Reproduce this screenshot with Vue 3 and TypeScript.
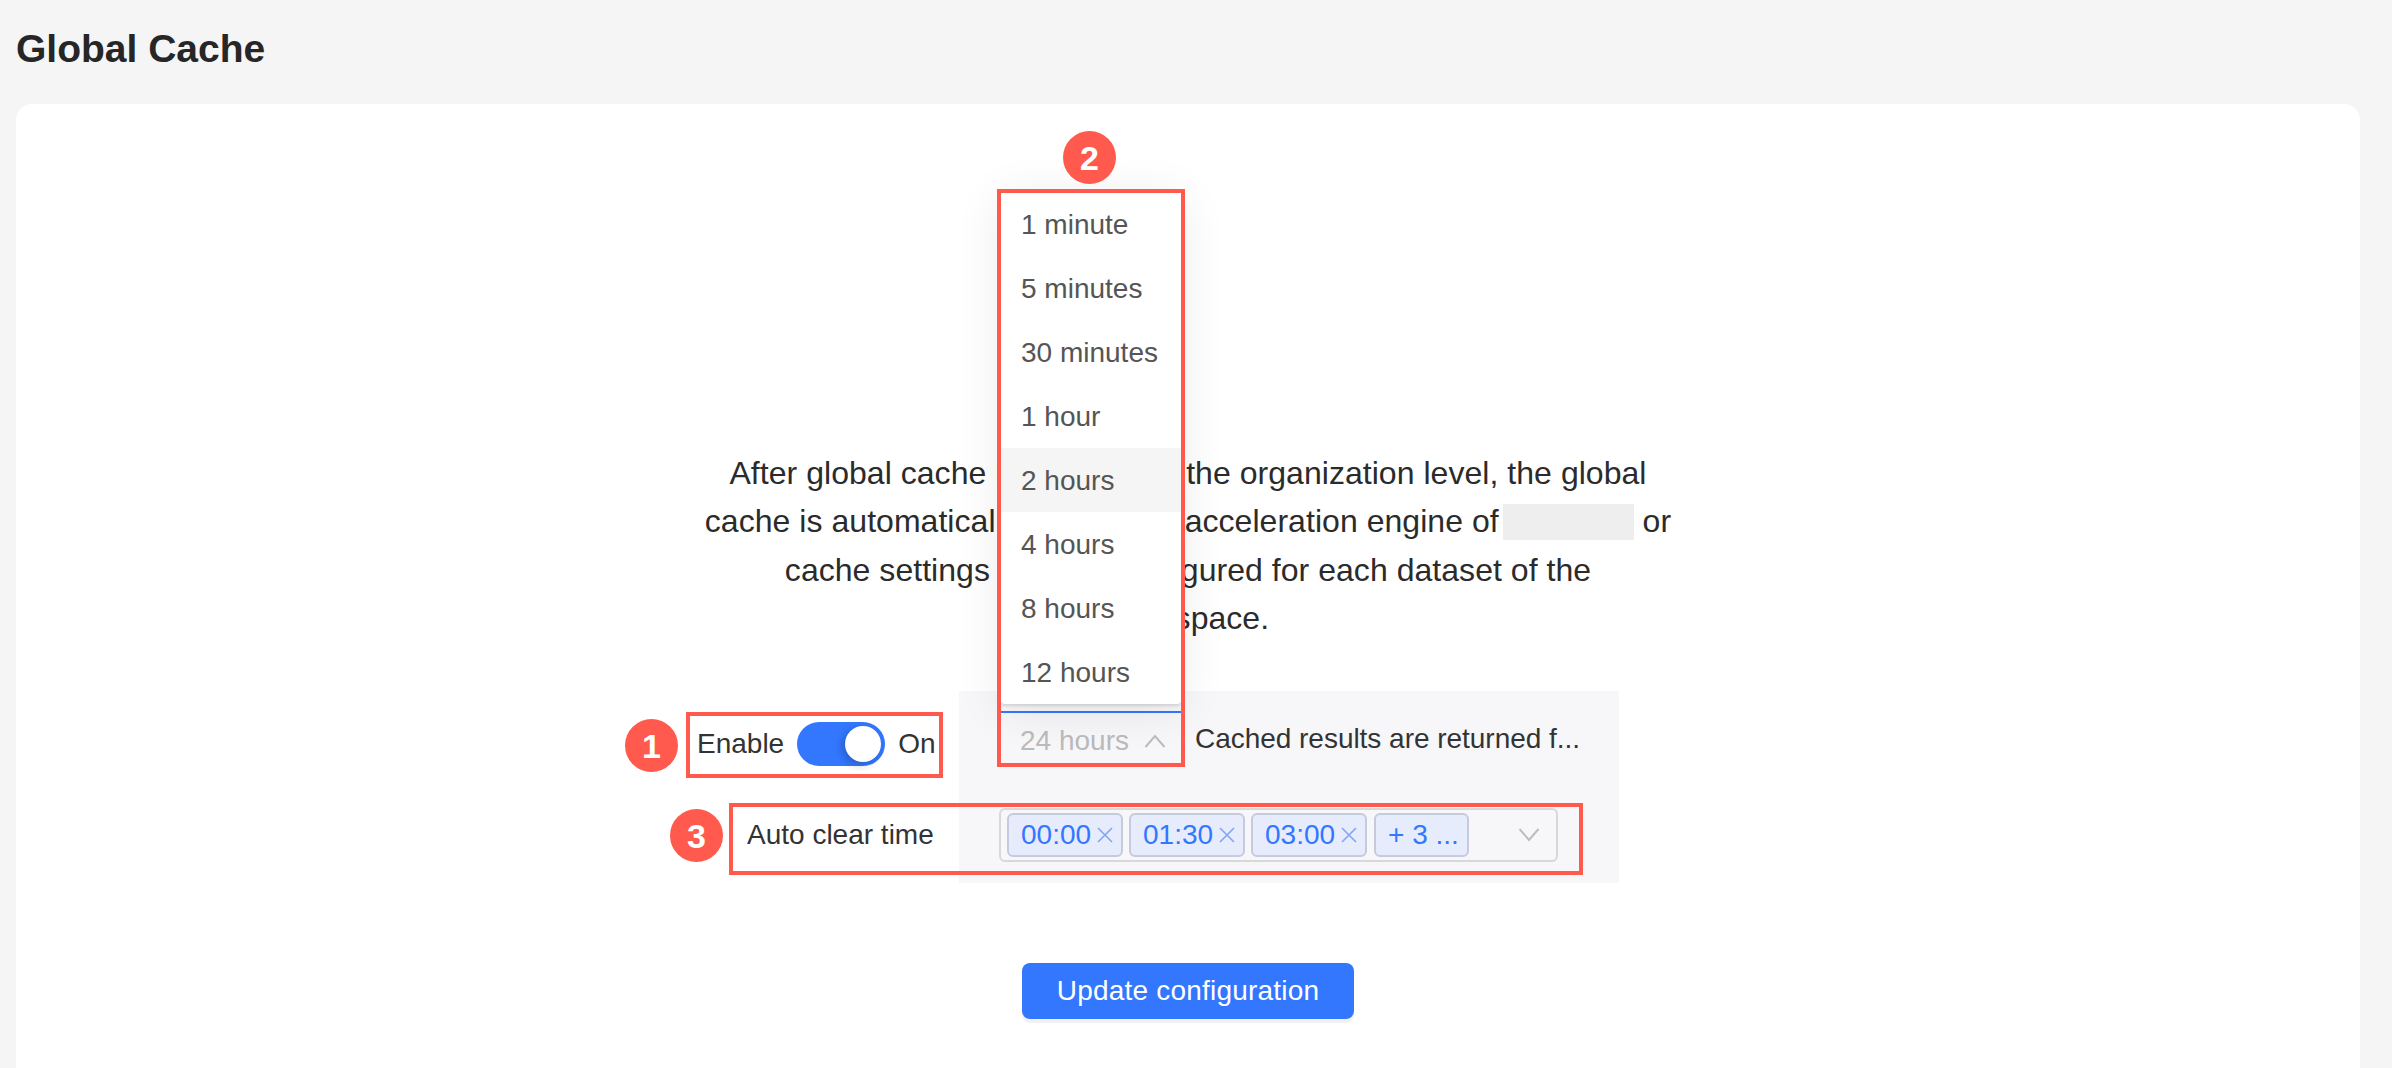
<script setup lang="ts">
const options: string[] = ['1 minute', '5 minutes', '30 minutes', '1 hour', '2 hours', '4 hours', '8 hours', '12 hours']
const tags: string[] = ['00:00', '01:30', '03:00']
</script>

<template>
  <div class="page">
    <h1 class="title">Global Cache</h1>
    <main class="card">
      <p class="intro">
        After global cache is enabled at the organization level, the global
        cache is automatically enabled in acceleration engine of<span class="redacted"></span> or
        cache settings may be configured for each dataset of the<br />workspace.
      </p>

      <section class="form">
        <div class="labels">
          <div class="label-row enable-row">
            <span>Enable</span>
            <span class="switch"><span class="knob"></span></span>
            <span>On</span>
          </div>
          <div class="label-row">
            <span class="auto-label">Auto clear time</span>
          </div>
        </div>

        <div class="panel">
          <div class="panel-row">
            <div class="select-wrap">
              <ul class="popup">
                <li v-for="o in options" :key="o" class="option" :class="{ hover: o === '2 hours' }">{{ o }}</li>
              </ul>
              <div class="select">
                <span>24 hours</span>
                <svg class="chev" width="22" height="14" viewBox="0 0 22 14"><polyline points="1.5,13 11,2 20.5,13" /></svg>
              </div>
            </div>
            <span class="hint">Cached results are returned f...</span>
          </div>
          <div class="panel-row">
            <div class="multi">
              <span v-for="t in tags" :key="t" class="tag">
                {{ t }}
                <svg class="x" width="16" height="16" viewBox="0 0 16 16"><path d="M1 1 15 15M15 1 1 15" /></svg>
              </span>
              <span class="tag more">+ 3 ...</span>
              <svg class="chev down" width="22" height="14" viewBox="0 0 22 14"><polyline points="1.5,1 11,12 20.5,1" /></svg>
            </div>
          </div>
        </div>
      </section>

      <button class="submit" type="button">Update configuration</button>
    </main>

    <div class="mark mark-1"></div>
    <div class="mark mark-2"></div>
    <div class="mark mark-3"></div>
    <div class="badge badge-1">1</div>
    <div class="badge badge-2">2</div>
    <div class="badge badge-3">3</div>
  </div>
</template>

<style>
html, body { margin: 0; padding: 0; background: #f5f5f5; }
</style>

<style scoped>
.page {
  position: relative;
  width: 2392px;
  height: 1068px;
  overflow: hidden;
  display: flex;
  flex-direction: column;
  padding: 0 32px 0 16px;
  box-sizing: border-box;
  background: #f5f5f5;
  font-family: "Liberation Sans", Arial, sans-serif;
  color: #2b2b2b;
}
.title {
  margin: 0;
  height: 104px;
  flex: none;
  display: flex;
  align-items: center;
  padding-bottom: 6px;
  box-sizing: border-box;
  font-size: 39px;
  font-weight: 700;
  color: #262626;
}
.card {
  flex: 1;
  display: flex;
  flex-direction: column;
  align-items: center;
  background: #fff;
  border-radius: 16px 16px 0 0;
  padding-top: 345px;
  box-sizing: border-box;
}
.intro {
  margin: 0;
  width: 990px;
  text-align: center;
  font-size: 32px;
  line-height: 48.4px;
  letter-spacing: 0.04px;
  color: #2b2b2b;
}
.redacted {
  display: inline-block;
  width: 131px;
  height: 36px;
  margin-left: 4px;
  vertical-align: -8px;
  background: #eeeeee;
}
.form {
  display: flex;
  margin: 48px 61px 0 0;
  font-size: 28px;
}
.labels {
  width: 263px;
  display: grid;
  grid-template-rows: 96px 96px;
}
.label-row {
  display: flex;
  align-items: center;
  gap: 13px;
  color: #333;
}
.enable-row {
  padding: 10px 0 0 1px;
  box-sizing: border-box;
}
.auto-label { margin-left: 51px; }
.switch {
  width: 88px;
  height: 44px;
  border-radius: 22px;
  background: #3377ff;
  display: flex;
  align-items: center;
  justify-content: flex-end;
  padding-right: 4px;
  box-sizing: border-box;
}
.knob {
  width: 36px;
  height: 36px;
  border-radius: 50%;
  background: #fff;
  box-shadow: -3px 3px 8px rgba(0, 0, 0, 0.22);
}
.panel {
  width: 660px;
  background: #f7f7fa;
  display: grid;
  grid-template-rows: 96px 96px;
}
.panel-row {
  display: flex;
  align-items: center;
  padding-left: 42px;
}
.panel-row + .panel-row { padding-left: 40px; }
.select-wrap {
  position: relative;
  width: 180px;
  flex: none;
}
.select {
  height: 56px;
  box-sizing: border-box;
  border-top: 2px solid #3377ff;
  display: flex;
  align-items: center;
  justify-content: space-between;
  padding: 2px 15px 0 19px;
  color: #bbbbbb;
}
.chev { fill: none; stroke: #bdbdbd; stroke-width: 2; flex: none; }
.popup {
  position: absolute;
  left: 0;
  right: 0;
  bottom: calc(100% + 7px);
  margin: 0;
  padding: 0;
  list-style: none;
  background: #fff;
  border-radius: 0 0 4px 4px;
  box-shadow: 0 2px 3px rgba(0, 0, 0, 0.12), 0 6px 48px rgba(0, 0, 0, 0.09);
}
.option {
  height: 64px;
  line-height: 66px;
  padding-left: 20px;
  color: #555;
}
.option.hover { background: #f5f5f5; }
.hint { margin-left: 14px; color: #333; white-space: nowrap; letter-spacing: -0.03px; }
.multi {
  width: 559px;
  height: 54px;
  box-sizing: border-box;
  border: 2px solid #d8d8d8;
  border-radius: 6px;
  display: flex;
  align-items: center;
  gap: 6px;
  padding: 0 16px 0 6px;
}
.tag {
  width: 116px;
  height: 44px;
  box-sizing: border-box;
  display: flex;
  align-items: center;
  justify-content: space-between;
  padding: 0 8px 0 12px;
  background: #e6ecfb;
  border: 2px solid #c5cbdc;
  border-radius: 6px;
  color: #3377ff;
  white-space: nowrap;
}
.tag.more { width: 95px; margin-left: 1px; }
.x { stroke: #84a5f0; stroke-width: 1.6; fill: none; flex: none; }
.down { margin-left: auto; }
.submit {
  margin-top: 80px;
  width: 332px;
  height: 56px;
  border: 0;
  border-radius: 8px;
  background: #3377ff;
  color: #fff;
  font-family: inherit;
  font-size: 28px;
  letter-spacing: 0.2px;
  box-shadow: 0 4px 0 #f2f2f2;
}
.mark {
  position: absolute;
  border: 4px solid #ff5a4d;
  box-sizing: border-box;
}
.mark-1 { left: 686px; top: 712px; width: 257px; height: 66px; }
.mark-2 { left: 997px; top: 189px; width: 188px; height: 578px; }
.mark-3 { left: 729px; top: 803px; width: 854px; height: 72px; }
.badge {
  position: absolute;
  width: 53px;
  height: 53px;
  border-radius: 50%;
  background: #ff5a4d;
  color: #fff;
  font-size: 34px;
  font-weight: 700;
  line-height: 55px;
  text-align: center;
}
.badge-1 { left: 625px; top: 719px; }
.badge-2 { left: 1063px; top: 131px; }
.badge-3 { left: 670px; top: 809px; }
</style>
